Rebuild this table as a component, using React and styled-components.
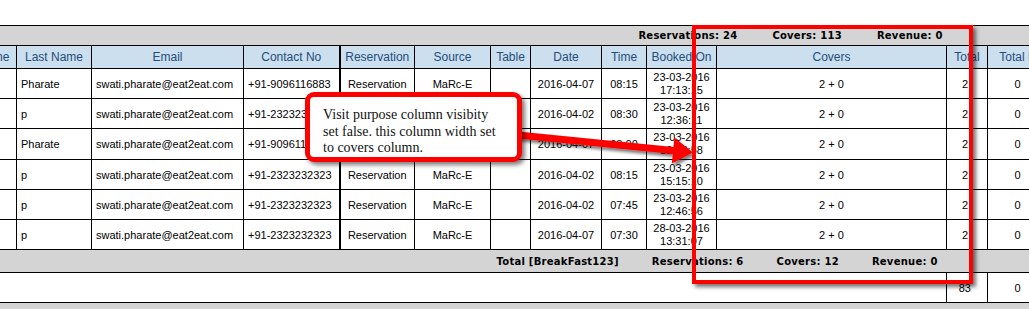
import React from "react";
import styled, { createGlobalStyle } from "styled-components";

const GlobalStyle = createGlobalStyle`
  html, body {
    margin: 0;
    padding: 0;
    background: #fff;
    overflow: hidden;
  }
  body {
    font-family: "Liberation Sans", Arial, sans-serif;
  }
`;

const Page = styled.div`
  position: relative;
  width: 1029px;
  height: 309px;
  overflow: hidden;
  padding-top: 25px;
  box-sizing: border-box;
  background: #fff;
`;

const Grid = styled.table`
  margin-left: -57px;
  width: 1104px;
  table-layout: fixed;
  border-collapse: collapse;
  font-size: 11px;
  color: #000;
`;

const Band = styled.td`
  height: ${(p) => p.$h}px;
  padding: 0;
  background: #d4d4d4;
  border-top: 1px solid #000;
  border-bottom: 1px solid #000;
`;

const Summary = styled.div`
  display: flex;
  justify-content: flex-end;
  align-items: center;
  gap: ${(p) => p.$gap}px;
  padding-right: ${(p) => p.$right}px;
  font-family: "DejaVu Sans", Verdana, sans-serif;
  font-size: 10px;
  letter-spacing: 0.25px;
  font-weight: bold;
  color: #000;
`;

const HeadRow = styled.tr`
  height: 23px;
`;

const HeadCell = styled.th`
  padding: 0;
  background: #cbdfee;
  color: #1f4d7c;
  font-weight: normal;
  font-size: 12px;
  text-align: center;
  white-space: nowrap;
  overflow: hidden;
  border: 1px solid #000;
  border-left-width: ${(p) => (p.$thick ? 2 : 1)}px;
`;

const DataRow = styled.tr`
  height: ${(p) => p.$h}px;
`;

const Cell = styled.td`
  padding: ${(p) => (p.$align === "right" ? "0 19px 0 0" : p.$align === "left" ? "0 0 0 4px" : "0")};
  text-align: ${(p) => p.$align || "center"};
  white-space: nowrap;
  overflow: hidden;
  vertical-align: middle;
  border: 1px solid #000;
  border-left-width: ${(p) => (p.$thick ? 2 : 1)}px;
`;

const Booked = styled.div`
  line-height: 13px;
  text-align: center;
`;

const TotalBlank = styled.td`
  padding: 0;
`;

const TotalCell = styled.td`
  padding: ${(p) => (p.$right ? "0 16px 0 0" : "0")};
  text-align: ${(p) => (p.$right ? "right" : "center")};
  border-left: 1px solid #000;
  border-right: 1px solid #000;
`;

const RedFrame = styled.div`
  position: absolute;
  left: 692px;
  top: 25px;
  width: 281px;
  height: 259px;
  box-sizing: border-box;
  border: 4px solid #ff0000;
  box-shadow: 3px 3px 4px rgba(0, 0, 0, 0.55);
`;

const Arrow = styled.svg`
  position: absolute;
  left: 0;
  top: 0;
  width: 1029px;
  height: 309px;
  pointer-events: none;
`;

const Callout = styled.div`
  position: absolute;
  left: 305px;
  top: 92px;
  width: 217px;
  height: 70px;
  box-sizing: border-box;
  padding: 10px 0 0 13px;
  background: #fff;
  border: 5px solid #ff0000;
  border-radius: 9px;
  box-shadow: 3px 3px 4px rgba(0, 0, 0, 0.5);
  font-family: "Liberation Serif", "Times New Roman", serif;
  font-size: 14px;
  line-height: 16.5px;
  color: #111;
  white-space: nowrap;
`;

const widths = [73, 75, 152, 96, 75, 76, 40, 71, 45, 70, 230, 41, 60];

const headers = [
  "First Name",
  "Last Name",
  "Email",
  "Contact No",
  "Reservation",
  "Source",
  "Table",
  "Date",
  "Time",
  "Booked On",
  "Covers",
  "Total",
  "Total E",
];

const rows = [
  { first: "Swati", last: "Pharate", phone: "+91-9096116883", date: "2016-04-07", time: "08:15", booked: ["23-03-2016", "17:13:15"], h: 30 },
  { first: "Swati", last: "p", phone: "+91-2323232323", date: "2016-04-02", time: "08:30", booked: ["23-03-2016", "12:36:11"], h: 30 },
  { first: "Swati", last: "Pharate", phone: "+91-9096116883", date: "2016-04-07", time: "08:00", booked: ["23-03-2016", "12:38:58"], h: 31 },
  { first: "Swati", last: "p", phone: "+91-2323232323", date: "2016-04-02", time: "08:15", booked: ["23-03-2016", "15:15:10"], h: 30 },
  { first: "Swati", last: "p", phone: "+91-2323232323", date: "2016-04-02", time: "07:45", booked: ["23-03-2016", "12:46:56"], h: 30 },
  { first: "Swati", last: "p", phone: "+91-2323232323", date: "2016-04-07", time: "07:30", booked: ["28-03-2016", "13:31:07"], h: 30 },
];

const App = () => {
  return (
    <Page>
      <GlobalStyle />
      <Grid>
        <colgroup>
          {widths.map((w, i) => (
            <col key={i} style={{ width: w }} />
          ))}
        </colgroup>
        <tbody>
          <tr>
            <Band colSpan={13} $h={19}>
              <Summary $right={105} $gap={35}>
                <span>Reservations: 24</span>
                <span>Covers: 113</span>
                <span>Revenue: 0</span>
              </Summary>
            </Band>
          </tr>
          <HeadRow>
            {headers.map((h, i) => (
              <HeadCell key={h} $thick={i === 4}>
                {h}
              </HeadCell>
            ))}
          </HeadRow>
          {rows.map((r, i) => (
            <DataRow key={i} $h={r.h}>
              <Cell $align="left">{r.first}</Cell>
              <Cell $align="left">{r.last}</Cell>
              <Cell $align="left">swati.pharate@eat2eat.com</Cell>
              <Cell $align="left">{r.phone}</Cell>
              <Cell $thick>Reservation</Cell>
              <Cell>MaRc-E</Cell>
              <Cell></Cell>
              <Cell>{r.date}</Cell>
              <Cell>{r.time}</Cell>
              <Cell>
                <Booked>
                  {r.booked[0]}
                  <br />
                  {r.booked[1]}
                </Booked>
              </Cell>
              <Cell>2 + 0</Cell>
              <Cell $align="right">2</Cell>
              <Cell>0</Cell>
            </DataRow>
          ))}
          <tr>
            <Band colSpan={13} $h={22}>
              <Summary $right={110} $gap={33}>
                <span>Total [BreakFast123]</span>
                <span>Reservations: 6</span>
                <span>Covers: 12</span>
                <span>Revenue: 0</span>
              </Summary>
            </Band>
          </tr>
          <DataRow $h={30}>
            <TotalBlank colSpan={11}></TotalBlank>
            <TotalCell $right>83</TotalCell>
            <TotalCell>0</TotalCell>
          </DataRow>
          <tr>
            <Band colSpan={13} $h={10}></Band>
          </tr>
        </tbody>
      </Grid>

      <Arrow viewBox="0 0 1029 309">
        <defs>
          <filter id="arrowShadow" x="-10%" y="-50%" width="120%" height="200%">
            <feDropShadow dx="2" dy="3" stdDeviation="1.5" floodColor="#000" floodOpacity="0.5" />
          </filter>
        </defs>
        <polygon
          points="518.3,131.5 673.4,147 674.4,137.6 693,152.5 671.8,163.4 672.8,154 517.7,138.5"
          fill="#ff0000"
          filter="url(#arrowShadow)"
        />
      </Arrow>

      <Callout>
        Visit purpose column visibity
        <br />
        set false. this column width set
        <br />
        to covers column.
      </Callout>

      <RedFrame />
    </Page>
  );
};

export default App;
